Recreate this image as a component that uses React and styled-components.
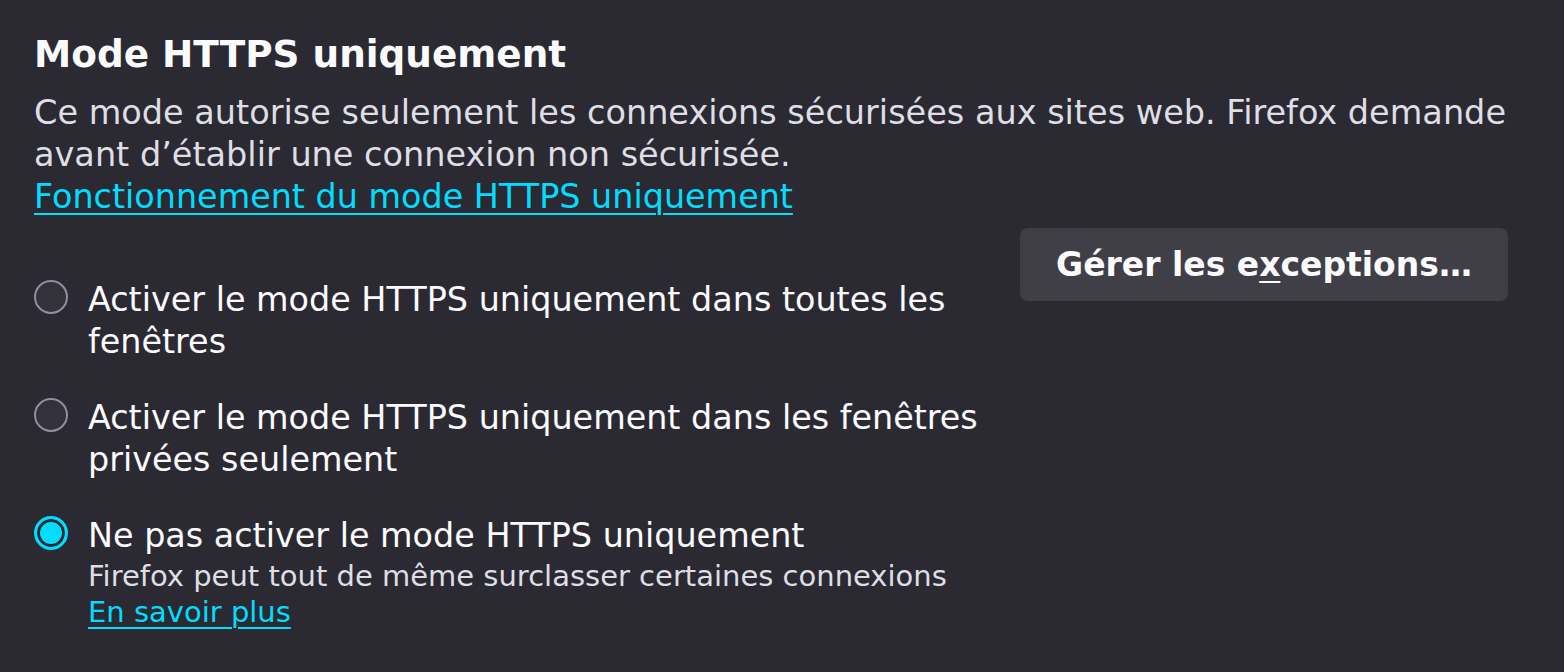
import React from 'react'
import styled, { createGlobalStyle } from 'styled-components'

const GlobalStyle = createGlobalStyle`
  html, body {
    margin: 0;
    padding: 0;
    background: #2b2a33;
  }
  body {
    font-family: "DejaVu Sans", Verdana, sans-serif;
    color: #fbfbfe;
  }
`

const Page = styled.div`
  width: 1564px;
  height: 672px;
  box-sizing: border-box;
  padding: 29px 30px 0 34px;
  background: #2b2a33;
  overflow: hidden;
`

const Title = styled.h1`
  margin: 0 0 13px;
  font-size: 37.4px;
  line-height: 50px;
  font-weight: 700;
  color: #fbfbfe;
`

const Description = styled.p`
  margin: 0;
  font-size: 33.5px;
  line-height: 42px;
  color: #dedee4;
`

const Link = styled.a`
  color: #00ddff;
  text-decoration: underline;
  text-underline-offset: 5px;
  text-decoration-thickness: 2px;
  font-size: ${p => p.$size || 33.4}px;
  line-height: ${p => p.$lh || 42}px;
  cursor: pointer;
`

const Body = styled.div`
  display: flex;
  align-items: flex-start;
  gap: 20px;
  padding-right: 26px;
`

const Options = styled.div`
  flex: 1;
  display: flex;
  flex-direction: column;
  gap: 34px;
  padding-top: 61px;
`

const Option = styled.label`
  display: flex;
  align-items: flex-start;
  gap: 20px;
`

const Radio = styled.span`
  flex: none;
  width: 34px;
  height: 34px;
  margin-top: 1px;
  box-sizing: border-box;
  border-radius: 50%;
  border: ${p => (p.$checked ? '3px solid #00ddff' : '2px solid #8f8f9d')};
  background: ${p => (p.$checked ? '#00ddff' : '#33323b')};
  box-shadow: ${p => (p.$checked ? 'inset 0 0 0 3px #2b2a33' : 'none')};
`

const LabelText = styled.div`
  display: flex;
  flex-direction: column;
  font-size: 33.4px;
  line-height: 42px;
  color: #fbfbfe;
`

const Hint = styled.span`
  font-size: 29px;
  line-height: 38px;
  color: #dedee4;
`

const Button = styled.button`
  flex: none;
  margin-top: 10px;
  width: 488px;
  height: 73px;
  border: none;
  border-radius: 8px;
  background: #403f48;
  color: #fbfbfe;
  font-family: "DejaVu Sans", Verdana, sans-serif;
  font-size: 33px;
  font-weight: 700;
  cursor: pointer;

  u {
    text-underline-offset: 5px;
    text-decoration-thickness: 2px;
  }
`

const options = [
  { label: 'Activer le mode HTTPS uniquement dans toutes les fenêtres' },
  { label: 'Activer le mode HTTPS uniquement dans les fenêtres privées seulement' },
  {
    label: 'Ne pas activer le mode HTTPS uniquement',
    hint: 'Firefox peut tout de même surclasser certaines connexions',
    checked: true
  }
]

const App = () => (
  <Page>
    <GlobalStyle />
    <Title>Mode HTTPS uniquement</Title>
    <Description>
      Ce mode autorise seulement les connexions sécurisées aux sites web. Firefox demande avant d’établir une connexion non sécurisée.
    </Description>
    <Link>Fonctionnement du mode HTTPS uniquement</Link>
    <Body>
      <Options>
        {options.map(opt => (
          <Option key={opt.label}>
            <Radio $checked={opt.checked} />
            <LabelText>
              <span>{opt.label}</span>
              {opt.hint && (
                <>
                  <Hint>{opt.hint}</Hint>
                  <Link $size={29} $lh={35}>En savoir plus</Link>
                </>
              )}
            </LabelText>
          </Option>
        ))}
      </Options>
      <Button>
        Gérer les e<u>x</u>ceptions…
      </Button>
    </Body>
  </Page>
)

export default App
